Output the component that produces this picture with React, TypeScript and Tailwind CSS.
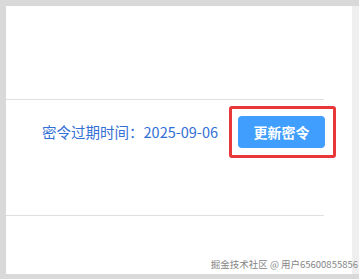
export default function App() {
  return (
    <div
      className="flex h-[279px] w-[359px] bg-[#d9d9d9] pl-[6px] pt-[6px] pb-[5px] pr-[7px]"
      style={{ fontFamily: '"Noto Sans CJK SC", "Noto Sans", sans-serif' }}
    >
      <div className="relative flex flex-1 flex-col bg-white">
        <div className="h-[93px]" />
        <div className="h-px w-[318px] bg-[#e0e0e0]" />
        <div className="flex h-[115px] w-[319px] items-start justify-end gap-[20px] pt-[16px]">
          <span className="mt-[5px] text-[14.5px] leading-[22px] text-[#3370d6]">
            密令过期时间：2025-09-06
          </span>
          <button className="h-[32px] w-[87px] rounded-[4px] bg-[#409eff] text-[14px] font-bold text-white">
            更新密令
          </button>
        </div>
        <div className="h-px w-[318px] bg-[#e0e0e0]" />

        {/* annotation box */}
        <div className="absolute left-[223px] top-[100px] h-[52px] w-[107px] rounded-[3px] border-[3px] border-[#e8383a]" />
        <div className="absolute right-0 top-0 h-full w-[7px] translate-x-full bg-[#efefef]" />
        <span
          className="absolute bottom-[4px] right-[-6px] whitespace-nowrap text-[9.5px] leading-[12px] text-[#858585]"
          style={{ textShadow: '0 0 1px #fff' }}
        >
          掘金技术社区 @ 用户65600855856
        </span>
      </div>
    </div>
  );
}
